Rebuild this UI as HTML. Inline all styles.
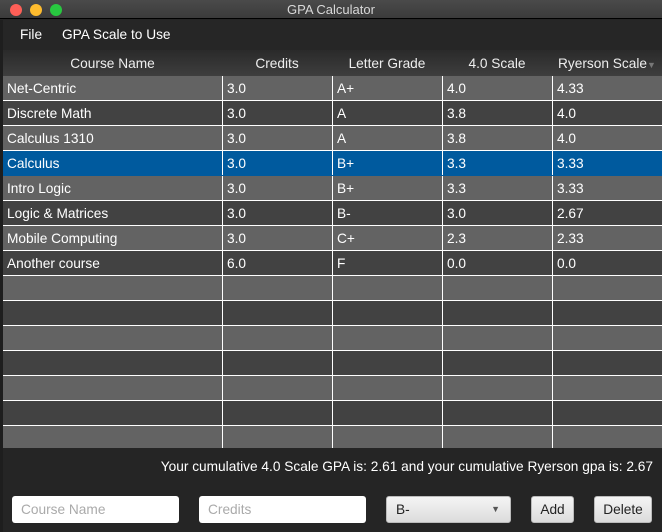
<!DOCTYPE html>
<html><head><style>
*{margin:0;padding:0;box-sizing:border-box}
body{width:662px;height:532px;background:#252525;font-family:"Liberation Sans",sans-serif;font-size:13.7px;color:#fff;position:relative;overflow:hidden}
.title{position:absolute;left:0;top:0;width:662px;height:19px;background:linear-gradient(#4a4a4a,#3b3b3b);border-bottom:1px solid #000;text-align:center;color:#d8d8d8;font-size:13px;line-height:19px}
.dot{position:absolute;top:4px;width:12px;height:12px;border-radius:50%}
.menu{position:absolute;top:20px;left:0;width:662px;height:30px;background:#262626;line-height:29px;font-size:13.7px}
.menu span{position:absolute}
.hdr{position:absolute;top:50px;left:3px;width:659px;height:26px;background:linear-gradient(#2a2a2a,#3e3e3e)}
.hdr div{position:absolute;top:0;line-height:27px;text-align:center;color:#eee}
.rows{position:absolute;top:76px;left:3px;width:659px;height:372px;overflow:hidden}
.r{height:25px;border-bottom:1px solid #fff;position:relative;line-height:26px}
.r div{position:absolute;top:0;height:24px;padding-left:4px;border-left:1px solid #fff}
.l{background:#636363}.d{background:#424242}.s{background:#005a9e}
.c0{left:0;width:219px;border-left:none!important}.c1{left:219px;width:110px}.c2{left:329px;width:110px}.c3{left:439px;width:110px}.c4{left:549px;width:110px}
.lf{position:absolute;left:0;top:20px;width:3px;height:512px;background:#1e1e1e}
.sum{position:absolute;top:459px;right:9px;font-size:13.7px;color:#fff}
.in{position:absolute;top:496px;height:27px;background:#fff;border-radius:3px;color:#aaa;padding-left:9px;line-height:27px}
.btn{position:absolute;top:496px;height:27px;background:linear-gradient(#f4f4f4,#dcdcdc);border:1px solid #bbb;border-radius:3px;color:#222;text-align:center;line-height:25px}
</style></head><body>
<div class="title">GPA Calculator
<div class="dot" style="left:10px;background:#fe5f57"></div>
<div class="dot" style="left:30px;background:#febc2e"></div>
<div class="dot" style="left:50px;background:#28c840"></div></div>
<div class="menu"><span style="left:20px">File</span><span style="left:62px">GPA Scale to Use</span></div>
<div class="lf"></div>
<div class="hdr">
<div style="left:0;width:219px">Course Name</div>
<div style="left:219px;width:110px">Credits</div>
<div style="left:329px;width:110px">Letter Grade</div>
<div style="left:439px;width:110px">4.0 Scale</div>
<div style="left:549px;width:110px;white-space:nowrap">Ryerson Scale<span style="color:#777;font-size:9px">▼</span></div>
</div>
<div class="rows">
<div class="r l"><div class="c0">Net-Centric</div><div class="c1">3.0</div><div class="c2">A+</div><div class="c3">4.0</div><div class="c4">4.33</div></div>
<div class="r d"><div class="c0">Discrete Math</div><div class="c1">3.0</div><div class="c2">A</div><div class="c3">3.8</div><div class="c4">4.0</div></div>
<div class="r l"><div class="c0">Calculus 1310</div><div class="c1">3.0</div><div class="c2">A</div><div class="c3">3.8</div><div class="c4">4.0</div></div>
<div class="r s" style="border-bottom-color:#005a9e"><div class="c0">Calculus</div><div class="c1">3.0</div><div class="c2">B+</div><div class="c3">3.3</div><div class="c4">3.33</div></div>
<div class="r l"><div class="c0">Intro Logic</div><div class="c1">3.0</div><div class="c2">B+</div><div class="c3">3.3</div><div class="c4">3.33</div></div>
<div class="r d"><div class="c0">Logic &amp; Matrices</div><div class="c1">3.0</div><div class="c2">B-</div><div class="c3">3.0</div><div class="c4">2.67</div></div>
<div class="r l"><div class="c0">Mobile Computing</div><div class="c1">3.0</div><div class="c2">C+</div><div class="c3">2.3</div><div class="c4">2.33</div></div>
<div class="r d"><div class="c0">Another course</div><div class="c1">6.0</div><div class="c2">F</div><div class="c3">0.0</div><div class="c4">0.0</div></div>
<div class="r l"><div class="c0"></div><div class="c1"></div><div class="c2"></div><div class="c3"></div><div class="c4"></div></div>
<div class="r d"><div class="c0"></div><div class="c1"></div><div class="c2"></div><div class="c3"></div><div class="c4"></div></div>
<div class="r l"><div class="c0"></div><div class="c1"></div><div class="c2"></div><div class="c3"></div><div class="c4"></div></div>
<div class="r d"><div class="c0"></div><div class="c1"></div><div class="c2"></div><div class="c3"></div><div class="c4"></div></div>
<div class="r l"><div class="c0"></div><div class="c1"></div><div class="c2"></div><div class="c3"></div><div class="c4"></div></div>
<div class="r d"><div class="c0"></div><div class="c1"></div><div class="c2"></div><div class="c3"></div><div class="c4"></div></div>
<div class="r l"><div class="c0"></div><div class="c1"></div><div class="c2"></div><div class="c3"></div><div class="c4"></div></div>
</div>
<div class="sum">Your cumulative 4.0 Scale GPA is: 2.61 and your cumulative Ryerson gpa is: 2.67</div>
<div class="in" style="left:12px;width:167px">Course Name</div>
<div class="in" style="left:199px;width:167px">Credits</div>
<div class="btn" style="left:386px;width:125px;text-align:left;padding-left:9px">B-<span style="position:absolute;right:10px;font-size:9px;color:#555">▼</span></div>
<div class="btn" style="left:531px;width:43px">Add</div>
<div class="btn" style="left:594px;width:58px">Delete</div>
</body></html>
